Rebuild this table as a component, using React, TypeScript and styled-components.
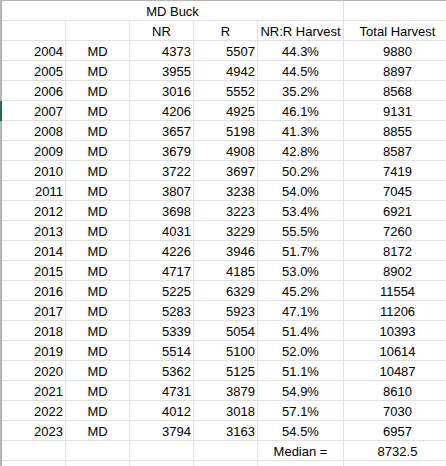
import React from 'react';
import styled, { createGlobalStyle } from 'styled-components';

const GlobalStyle = createGlobalStyle`
  html, body {
    margin: 0;
    padding: 0;
    background: #ffffff;
    overflow: hidden;
  }
`;

const data = [
  [2004, 4373, 5507, '44.3%', 9880],
  [2005, 3955, 4942, '44.5%', 8897],
  [2006, 3016, 5552, '35.2%', 8568],
  [2007, 4206, 4925, '46.1%', 9131],
  [2008, 3657, 5198, '41.3%', 8855],
  [2009, 3679, 4908, '42.8%', 8587],
  [2010, 3722, 3697, '50.2%', 7419],
  [2011, 3807, 3238, '54.0%', 7045],
  [2012, 3698, 3223, '53.4%', 6921],
  [2013, 4031, 3229, '55.5%', 7260],
  [2014, 4226, 3946, '51.7%', 8172],
  [2015, 4717, 4185, '53.0%', 8902],
  [2016, 5225, 6329, '45.2%', 11554],
  [2017, 5283, 5923, '47.1%', 11206],
  [2018, 5339, 5054, '51.4%', 10393],
  [2019, 5514, 5100, '52.0%', 10614],
  [2020, 5362, 5125, '51.1%', 10487],
  [2021, 4731, 3879, '54.9%', 8610],
  [2022, 4012, 3018, '57.1%', 7030],
  [2023, 3794, 3163, '54.5%', 6957],
];

const Sheet = styled.div`
  width: 446px;
  height: 466px;
  overflow: hidden;
  border-top: 1px solid #b4b4b4;
  box-sizing: border-box;
  font-family: 'Liberation Sans', Arial, sans-serif;
  font-size: 13px;
  color: #000000;
`;

const Row = styled.div<{ $active?: boolean }>`
  display: grid;
  grid-template-columns: 64px 64px 64px 64px 86px 108px;
  height: 20px;
  border-left: 2px solid ${(p) => (p.$active ? '#217346' : '#b4b4b4')};
`;

const Cell = styled.div<{ $align?: string; $span?: number }>`
  box-sizing: border-box;
  height: 20px;
  border-right: 1px solid #e1e1e1;
  border-bottom: 1px solid #e1e1e1;
  padding: 3px ${(p) => (p.$align === 'center' ? '0' : '2px')} 0;
  line-height: 16px;
  white-space: nowrap;
  overflow: hidden;
  text-align: ${(p) => p.$align || 'left'};
  grid-column: ${(p) => (p.$span ? `span ${p.$span}` : 'auto')};
`;

export default function App() {
  return (
    <>
      <GlobalStyle />
      <Sheet>
        <Row>
          <Cell $span={5} $align="center">MD Buck</Cell>
          <Cell />
        </Row>
        <Row>
          <Cell />
          <Cell />
          <Cell $align="center">NR</Cell>
          <Cell $align="center">R</Cell>
          <Cell $align="center">NR:R Harvest</Cell>
          <Cell $align="center">Total Harvest</Cell>
        </Row>
        {data.map(([year, nr, r, pct, total]) => (
          <Row key={year} $active={year === 2007}>
            <Cell $align="right">{year}</Cell>
            <Cell $align="center">MD</Cell>
            <Cell $align="right">{nr}</Cell>
            <Cell $align="right">{r}</Cell>
            <Cell $align="center">{pct}</Cell>
            <Cell $align="center">{total}</Cell>
          </Row>
        ))}
        <Row>
          <Cell />
          <Cell />
          <Cell />
          <Cell />
          <Cell $align="center">Median =</Cell>
          <Cell $align="center">8732.5</Cell>
        </Row>
        <Row>
          <Cell />
          <Cell />
          <Cell />
          <Cell />
          <Cell />
          <Cell />
        </Row>
      </Sheet>
    </>
  );
}
